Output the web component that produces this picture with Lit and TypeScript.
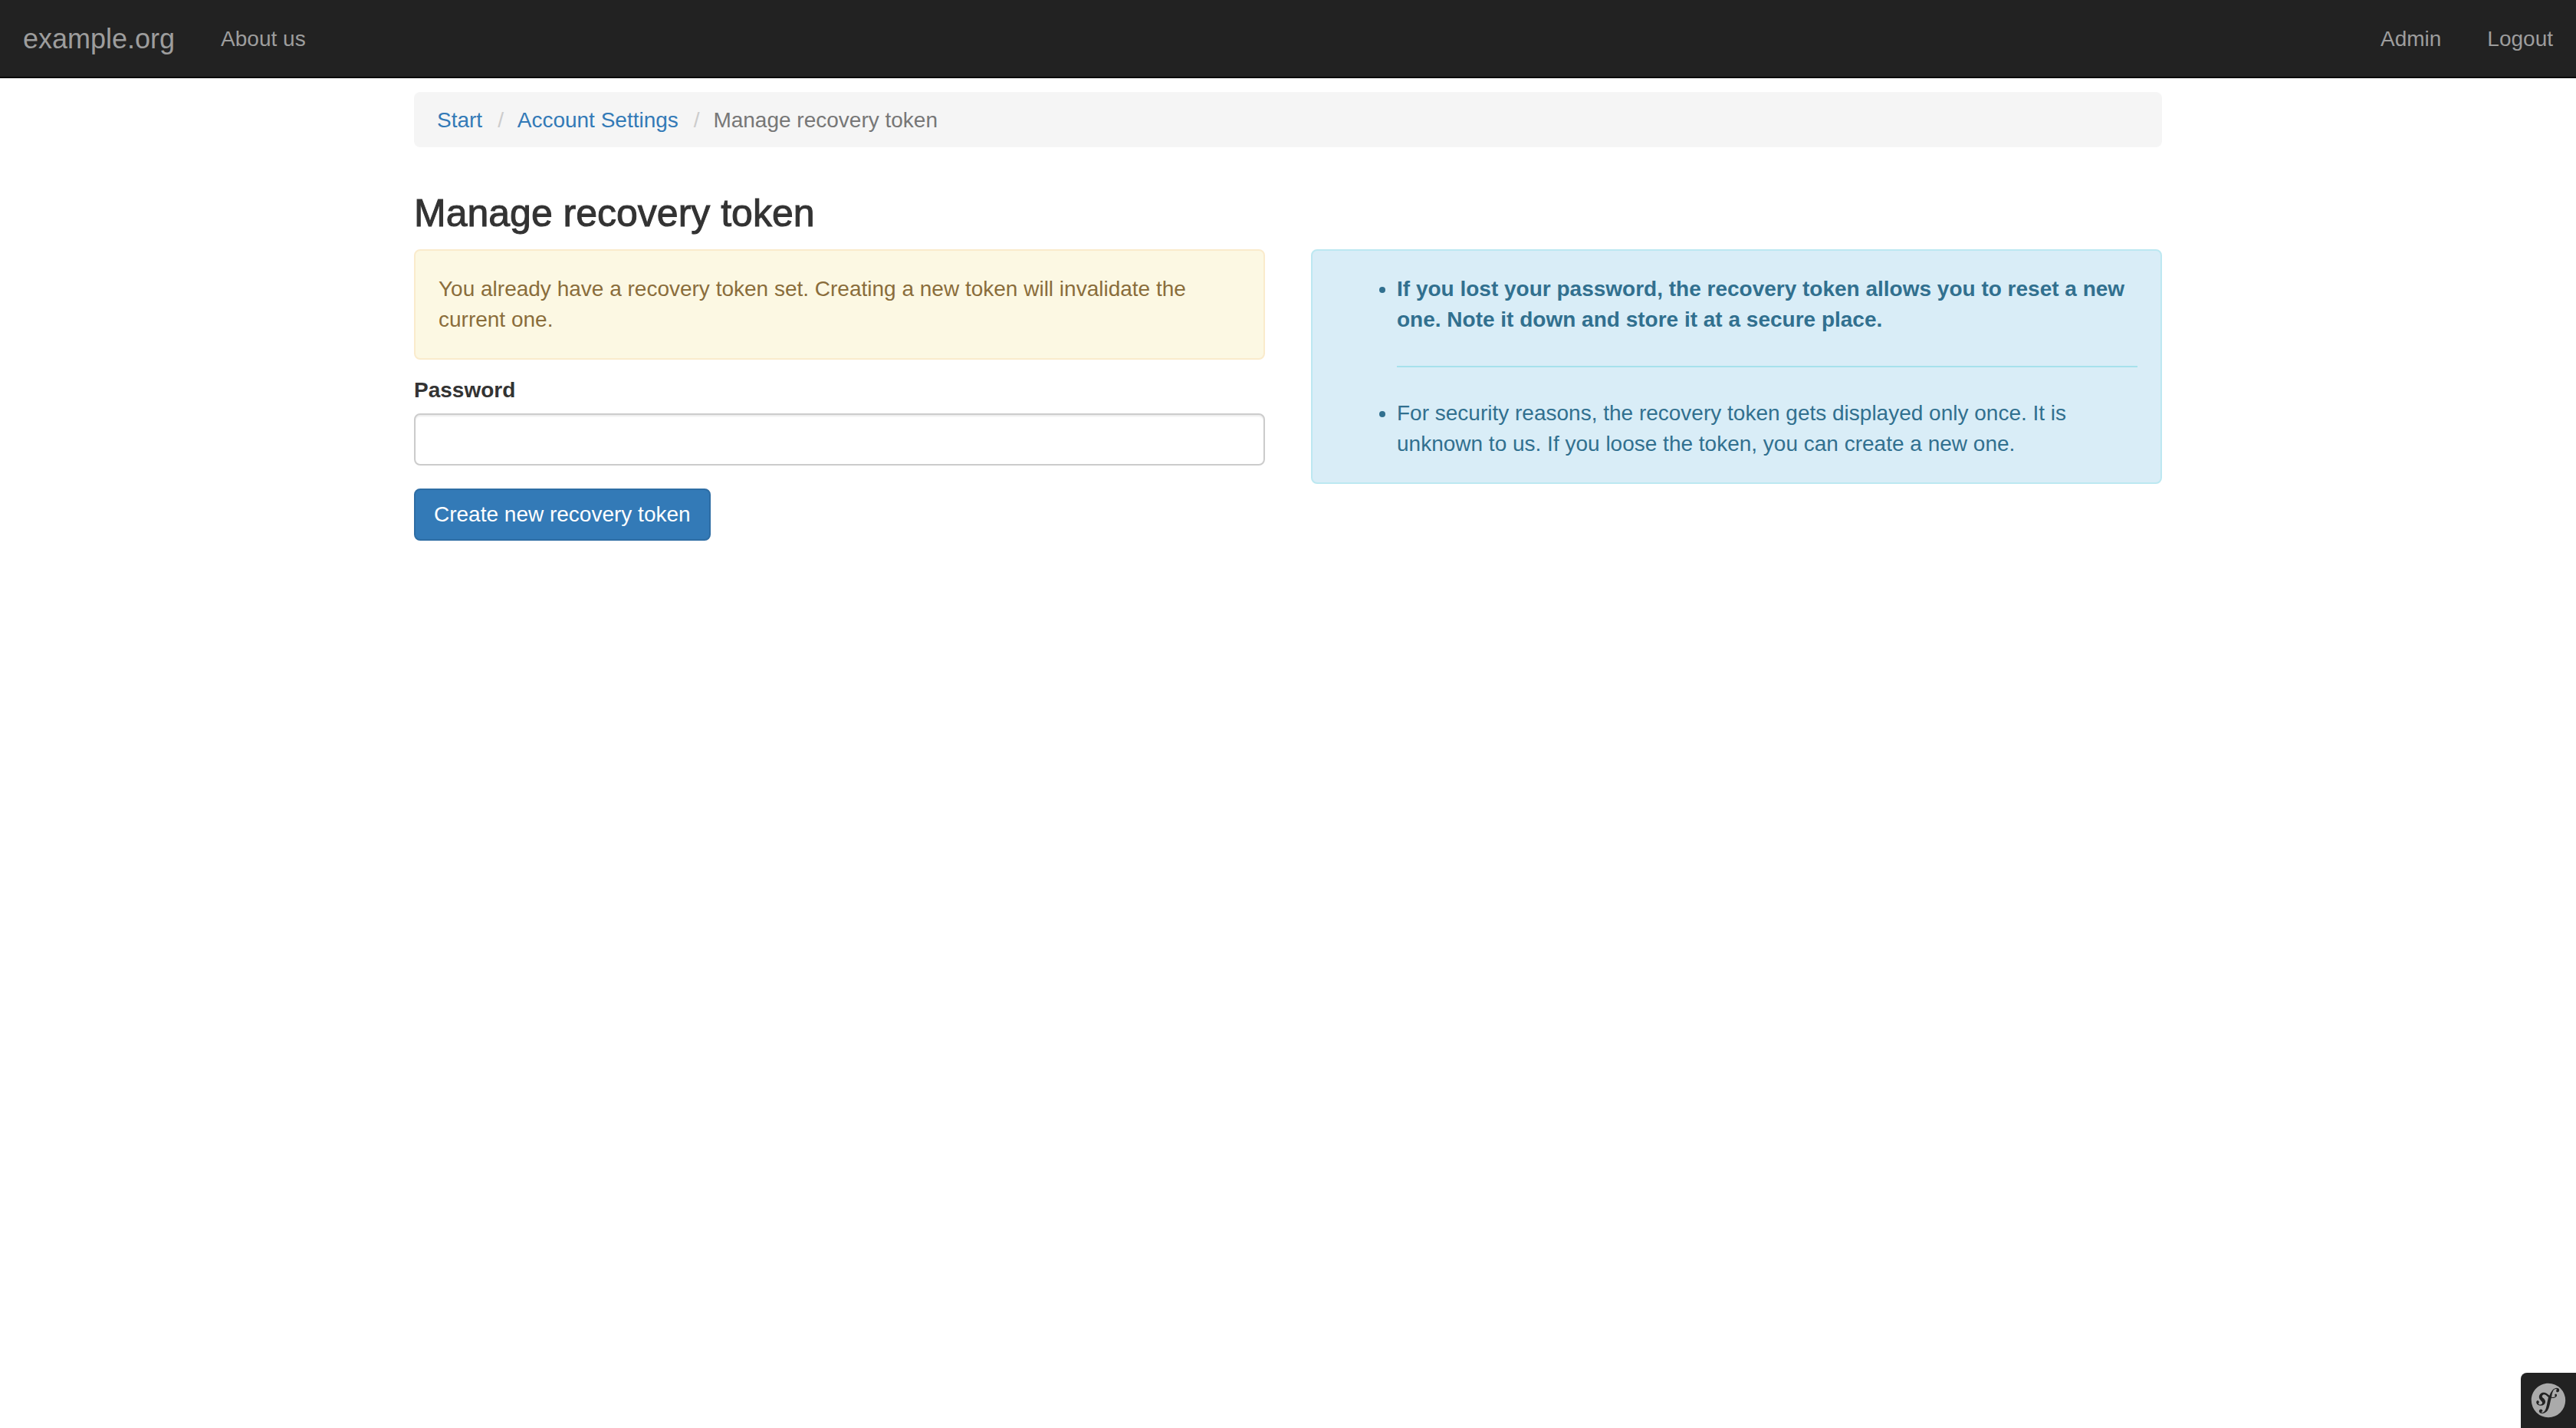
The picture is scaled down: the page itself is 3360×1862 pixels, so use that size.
import { LitElement, html, css } from "lit";
import { customElement } from "lit/decorators.js";

@customElement("app-root")
export class AppRoot extends LitElement {
  static styles = css`
    :host {
      display: block;
      min-height: 100vh;
      background: #fff;
      color: #333;
      font-family: "Helvetica Neue", "Liberation Sans", Arial, sans-serif;
      font-size: 28px;
      line-height: 40px;
    }
    *,
    *::before,
    *::after {
      box-sizing: border-box;
    }
    a {
      color: #337ab7;
      text-decoration: none;
    }
    .navbar {
      display: flex;
      justify-content: space-between;
      background: #222;
      border-bottom: 2px solid #080808;
    }
    .group {
      display: flex;
    }
    .navbar a {
      padding: 31px 30px 29px;
      color: #9d9d9d;
    }
    .navbar .brand {
      font-size: 36px;
    }
    .container {
      max-width: 2340px;
      margin: 0 auto;
      padding: 18px 30px;
    }
    .breadcrumb {
      display: flex;
      gap: 10px;
      margin: 0 0 60px;
      padding: 17px 30px 15px;
      list-style: none;
      background: #f5f5f5;
      border-radius: 8px;
    }
    .crumb + .crumb::before {
      content: "/\\00a0";
      padding: 0 10px;
      color: #ccc;
    }
    .crumb.active {
      color: #777;
    }
    .title {
      margin: 0 0 20px;
      font-size: 50px;
      font-weight: 500;
      line-height: 53px;
      -webkit-text-stroke: 1px currentColor;
    }
    .columns {
      display: grid;
      grid-template-columns: 1fr 1fr;
      gap: 60px;
      align-items: start;
    }
    .alert {
      padding: 30px;
      border: 2px solid;
      border-radius: 8px;
    }
    .warning {
      margin: 0 0 20px;
      color: #8a6d3b;
      background: #fcf8e3;
      border-color: #faebcc;
    }
    .info {
      color: #31708f;
      background: #d9edf7;
      border-color: #bce8f1;
    }
    .notes {
      margin: 0;
      padding: 0 0 0 80px;
    }
    .rule {
      margin: 40px 0;
      border: 0;
      border-top: 2px solid #a6e1ec;
    }
    .label {
      display: block;
      margin-bottom: 10px;
      font-weight: 700;
    }
    .field {
      display: block;
      width: 100%;
      height: 68px;
      margin: 0 0 30px;
      padding: 12px 24px;
      font: inherit;
      color: #555;
      background: #fff;
      border: 2px solid #ccc;
      border-radius: 8px;
      box-shadow: inset 0 2px 2px rgba(0, 0, 0, 0.075);
    }
    .submit {
      padding: 12px 24px;
      font: inherit;
      color: #fff;
      background: #337ab7;
      border: 2px solid #2e6da4;
      border-radius: 8px;
      cursor: pointer;
    }
    .toolbar {
      position: fixed;
      right: 0;
      bottom: 0;
      display: flex;
      padding: 12px;
      background: #222;
      border: 0;
      border-radius: 8px 0 0 0;
      cursor: pointer;
    }
    .logo {
      display: block;
      width: 48px;
      height: 48px;
      fill: #aaa;
    }
  `;

  render() {
    return html`
      <nav class="navbar">
        <div class="group">
          <a class="brand" href="#">example.org</a>
          <a href="#about">About us</a>
        </div>
        <div class="group">
          <a href="#admin">Admin</a>
          <a href="#logout">Logout</a>
        </div>
      </nav>
      <main class="container">
        <ol class="breadcrumb">
          <li class="crumb"><a href="#start">Start</a></li>
          <li class="crumb"><a href="#account">Account Settings</a></li>
          <li class="crumb active">Manage recovery token</li>
        </ol>
        <h3 class="title">Manage recovery token</h3>
        <div class="columns">
          <form class="form">
            <p class="alert warning">
              You already have a recovery token set. Creating a new token will
              invalidate the current one.
            </p>
            <label class="label" for="password">Password</label>
            <input class="field" id="password" type="password" />
            <button class="submit" type="button">Create new recovery token</button>
          </form>
          <aside class="alert info">
            <ul class="notes">
              <li>
                <strong
                  >If you lost your password, the recovery token allows you to
                  reset a new one. Note it down and store it at a secure
                  place.</strong
                >
                <hr class="rule" />
              </li>
              <li>
                For security reasons, the recovery token gets displayed only
                once. It is unknown to us. If you loose the token, you can
                create a new one.
              </li>
            </ul>
          </aside>
        </div>
      </main>
      <button class="toolbar" type="button" aria-label="Symfony">
        <svg class="logo" viewBox="0 0 24 24" aria-hidden="true">
          <path
            fill-rule="evenodd"
            d="M12 .9C5.8.9.9 5.8.9 12a11.1 11.1 0 1 0 22.2 0A11.1 11.1 0 0 0 12 .9zM18 6.7c-.6 0-.9-.3-.9-.8 0-.2 0-.4.2-.6l.2-.4c0-.3-.5-.4-.6-.4-1.8.1-2.3 2.5-2.7 4.4l-.2 1c1 .2 1.8 0 2.2-.3.6-.4-.2-.7-.1-1.2.1-.3.5-.5.7-.6.5 0 .7.5.7.9 0 .7-1 1.8-3 1.8l-.6-.1-.6 2.4c-.4 1.6-.6 3.9-1.9 5.8-1.4 1.7-2.9 1.9-3.5 1.9-1.2 0-1.9-.6-2-1.5 0-.8.7-1.3 1.2-1.3.6 0 1.1.5 1.1 1s-.2.6-.4.6c-.1.1-.3.2-.3.4 0 .1.1.3.4.3.5 0 .8-.3 1.1-.5 1.2-.9 1.6-2.7 2.2-5.7l.1-.7.7-3.2c-.8-.6-1.3-1.4-2.4-1.7-.6-.1-1.1.1-1.5.5-.4.5-.2 1.1.2 1.5l.7.6c.7.8 1.2 1.6 1 2.5-.3 1.5-2 2.6-4 1.9-1.8-.6-2-1.8-1.8-2.5.2-.6.6-.7 1.1-.6.5.2.6.7.6 1.2l-.1.3c-.2.1-.3.3-.3.4-.1.4.4.6.7.7.7.3 1.6-.2 1.8-.8.2-.6-.2-1.1-.4-1.2l-.8-.9c-.4-.4-1.2-1.5-.8-2.8.2-.5.5-1 .9-1.4 1-.8 2-.8 3-.6 1.3.4 1.9 1.2 2.8 1.9.5-1.3 1-2.4 1.9-3.5.8-.9 1.7-1.4 2.8-1.5 1 0 1.7.5 1.7 1.3 0 .7-.4 1.4-1.1 1.4z"
          />
        </svg>
      </button>
    `;
  }
}
